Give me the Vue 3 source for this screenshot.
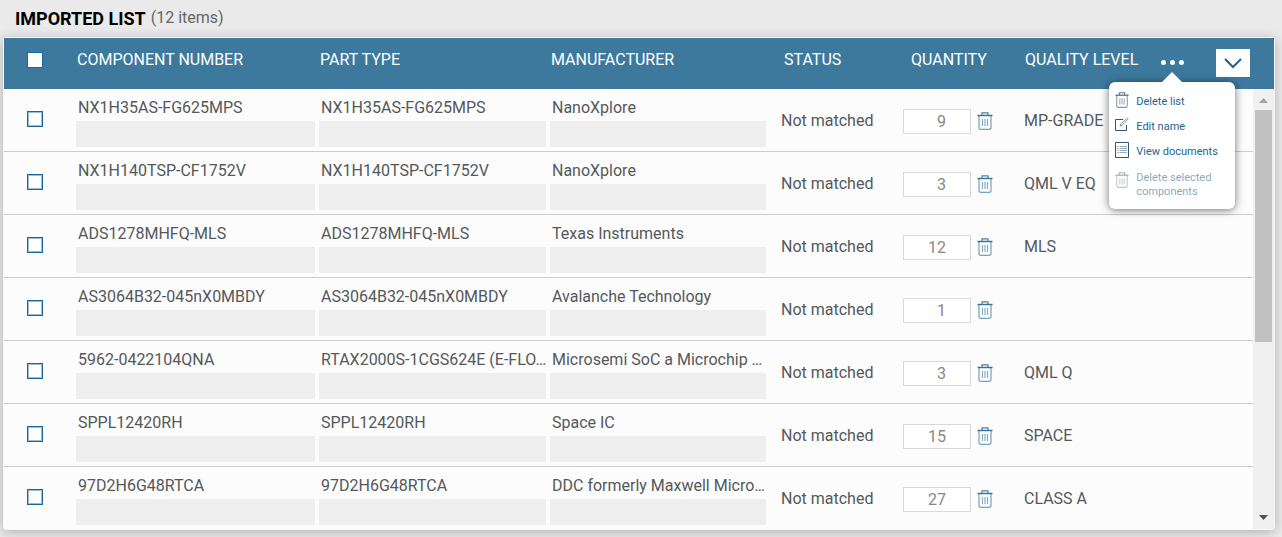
<script setup>
import { ref } from 'vue'

const rows = ref([
  { number: 'NX1H35AS-FG625MPS', type: 'NX1H35AS-FG625MPS', maker: 'NanoXplore', qty: 9, level: 'MP-GRADE' },
  { number: 'NX1H140TSP-CF1752V', type: 'NX1H140TSP-CF1752V', maker: 'NanoXplore', qty: 3, level: 'QML V EQ' },
  { number: 'ADS1278MHFQ-MLS', type: 'ADS1278MHFQ-MLS', maker: 'Texas Instruments', qty: 12, level: 'MLS' },
  { number: 'AS3064B32-045nX0MBDY', type: 'AS3064B32-045nX0MBDY', maker: 'Avalanche Technology', qty: 1, level: '' },
  { number: '5962-0422104QNA', type: 'RTAX2000S-1CGS624E (E-FLO…', maker: 'Microsemi SoC a Microchip …', qty: 3, level: 'QML Q' },
  { number: 'SPPL12420RH', type: 'SPPL12420RH', maker: 'Space IC', qty: 15, level: 'SPACE' },
  { number: '97D2H6G48RTCA', type: '97D2H6G48RTCA', maker: 'DDC formerly Maxwell Micro…', qty: 27, level: 'CLASS A' }
])
const menuOpen = ref(true)
</script>

<template>
  <main class="page">
    <header class="heading">
      <h1>IMPORTED LIST</h1>
      <span class="count">(12 items)</span>
    </header>

    <svg class="defs" aria-hidden="true">
      <symbol id="trash" viewBox="0 0 16 18">
        <path d="M0.5 3.5H15.5" stroke-width="1.4" opacity=".9" />
        <path d="M5 3V0.8H11V3" stroke-width="1.2" opacity=".8" />
        <path d="M2 4V15.5Q2 17.4 4 17.4H12Q14 17.4 14 15.5V4" stroke-width="1.2" opacity=".6" />
        <path d="M5.5 7V14M8 7V14M10.5 7V14" stroke-width="1.2" opacity=".5" />
      </symbol>
    </svg>

    <section class="panel">
      <table>
        <colgroup>
          <col class="c-check"><col class="c-number"><col class="c-type"><col class="c-maker">
          <col class="c-status"><col class="c-qty"><col class="c-level">
        </colgroup>
        <thead>
          <tr>
            <th class="check"><input type="checkbox" aria-label="Select all components"></th>
            <th>COMPONENT NUMBER</th>
            <th>PART TYPE</th>
            <th>MANUFACTURER</th>
            <th class="h-status">STATUS</th>
            <th class="h-qty">QUANTITY</th>
            <th class="h-level">
              <div class="tools">
                <span>QUALITY LEVEL</span>
                <div class="more">
                  <button class="dots" type="button" aria-label="List actions" @click="menuOpen = !menuOpen">
                    <i></i><i></i><i></i>
                  </button>
                  <div v-if="menuOpen" class="menu">
                    <button type="button">
                      <svg width="14" height="16"><use href="#trash" /></svg><span>Delete list</span>
                    </button>
                    <button type="button">
                      <svg width="14" height="16" viewBox="0 0 14 16">
                        <path d="M8 2.5H0.5V13.5H11.5V8" />
                        <path d="M5 9L5.6 7L13 0.5M5 9L7 8.4L13.6 1.5" stroke-width=".8" opacity=".7" />
                      </svg><span>Edit name</span>
                    </button>
                    <button type="button">
                      <svg width="14" height="16" viewBox="0 0 14 16">
                        <path d="M0.5 0.5H13.5V15.5H0.5Z" />
                        <path d="M2 4.5H3.5M2 6.5H3.5M2 8.5H3.5M2 10.5H3.5M4.5 4.5H12M4.5 6.5H12M4.5 8.5H12M4.5 10.5H12" opacity=".5" />
                      </svg><span>View documents</span>
                    </button>
                    <button class="last" type="button" disabled>
                      <svg width="14" height="16"><use href="#trash" /></svg><span>Delete selected components</span>
                    </button>
                  </div>
                </div>
                <button class="collapse" type="button" aria-label="Collapse list">
                  <svg width="18" height="11" viewBox="0 0 18 11"><path d="M1 1L9 9L17 1" stroke-width="2" /></svg>
                </button>
              </div>
            </th>
          </tr>
        </thead>
        <tbody>
          <tr v-for="row in rows" :key="row.number">
            <td class="check"><input type="checkbox" :aria-label="'Select ' + row.number"></td>
            <td class="pair"><div class="value">{{ row.number }}</div><div class="match"></div></td>
            <td class="pair"><div class="value">{{ row.type }}</div><div class="match"></div></td>
            <td class="pair"><div class="value">{{ row.maker }}</div><div class="match"></div></td>
            <td class="status">Not matched</td>
            <td class="qty">
              <div class="qty-line">
                <input v-model="row.qty" type="text" :aria-label="'Quantity of ' + row.number">
                <button type="button" :aria-label="'Delete ' + row.number">
                  <svg width="16" height="18"><use href="#trash" /></svg>
                </button>
              </div>
            </td>
            <td class="level">{{ row.level }}</td>
          </tr>
        </tbody>
      </table>
      <div class="rail">
        <div class="rail-head"></div>
        <div class="track">
          <svg width="9" height="5" viewBox="0 0 9 5"><path class="up" d="M0 5L4.5 0L9 5Z" /></svg>
          <div class="thumb"></div>
          <svg width="9" height="5" viewBox="0 0 9 5"><path class="down" d="M0 0L4.5 5L9 0Z" /></svg>
        </div>
      </div>
    </section>
  </main>
</template>

<style>
body {
  margin: 0;
  background: #eaeaea;
}
</style>

<style scoped>
* {
  box-sizing: border-box;
}
.page {
  min-height: 100vh;
  padding: 0 7px 7px 3px;
  font: 16px/22px Roboto, sans-serif;
  color: #55585b;
}
.defs {
  position: absolute;
  width: 0;
  height: 0;
}
svg {
  display: block;
  flex: none;
  fill: none;
  stroke: currentColor;
}
.heading {
  display: flex;
  gap: 5px;
  height: 37px;
  padding: 7px 12px;
}
h1 {
  margin: 0;
  font-size: 18px;
  line-height: 24px;
  font-weight: 700;
  color: #000;
}
.count {
  color: #666;
}
.panel {
  display: flex;
  border: 1px solid #f7f7f7;
  border-radius: 3px;
  background: #fcfcfc;
  box-shadow: 0 2px 12px rgba(0, 0, 0, .25);
}
table {
  flex: 1;
  width: 0;
  table-layout: fixed;
  border-collapse: separate;
  border-spacing: 0;
}
.c-check { width: 70px; }
.c-number { width: 243px; }
.c-type { width: 231px; }
.c-maker { width: 220px; }
.c-status { width: 125px; }
.c-qty { width: 117px; }
.c-level { width: 243px; }
th {
  height: 51px;
  padding: 11px 3px 0;
  background: #3d799d;
  color: #fff;
  font-weight: 400;
  text-align: left;
  vertical-align: top;
}
td {
  height: 63px;
  padding: 0 2px;
  border-bottom: 1px solid #ccc;
}
tbody tr:last-child td {
  height: 62px;
  border-bottom: 0;
}
th.h-status { padding-left: 16px; }
th.h-qty { padding-left: 18px; }
th.h-level { padding: 11px 2px 0 15px; }
.check input {
  display: block;
  appearance: none;
  width: 16px;
  height: 16px;
  margin: 0 0 0 20px;
  border: 1px solid #1a659b;
  background: #fff;
  box-shadow: inset 0 0 0 1px #9dbdd4;
}
th.check {
  padding-top: 14px;
}
th.check input {
  box-shadow: none;
}
td.check {
  padding: 22px 3px 0;
  vertical-align: top;
}
td.pair {
  padding-top: 8px;
  vertical-align: top;
}
.value {
  padding-left: 2px;
  margin-bottom: 2px;
  overflow: hidden;
  white-space: nowrap;
}
.match {
  height: 26px;
  background: #eee;
}
td.status {
  padding: 2px 0 0 13px;
}
td.level {
  padding: 2px 0 0 14px;
}
.qty {
  padding-left: 10px;
}
.qty-line {
  display: flex;
  align-items: center;
  gap: 6px;
  padding-top: 2px;
}
.qty-line input {
  width: 68px;
  height: 25px;
  padding: 0 24px 0 0;
  border: 1px solid #d9d9d9;
  background: #fff;
  color: #888;
  font: inherit;
  text-align: right;
}
button {
  padding: 0;
  border: 0;
  background: none;
  font: inherit;
  color: #1f648f;
  cursor: pointer;
}
.tools {
  display: flex;
}
.more {
  position: relative;
  margin-left: 21px;
}
.dots {
  display: flex;
  gap: 4px;
  height: 26px;
  width: 26px;
  align-items: center;
  justify-content: center;
}
.dots i {
  width: 5px;
  height: 5px;
  border-radius: 50%;
  background: #fff;
}
.collapse {
  display: flex;
  align-items: center;
  justify-content: center;
  width: 34px;
  height: 28px;
  margin: 0 1px 0 auto;
  background: #fff;
}
.menu {
  position: absolute;
  top: 33px;
  left: -50px;
  z-index: 1;
  width: 126px;
  padding: 10px 6px;
  border-radius: 6px;
  background: #fff;
  box-shadow: 0 1px 8px rgba(0, 0, 0, .55);
}
.menu::before {
  content: '';
  position: absolute;
  top: -10px;
  left: 53px;
  border: solid transparent;
  border-width: 0 10px 10px;
  border-bottom-color: #fff;
}
.menu button {
  display: flex;
  gap: 7px;
  width: 100%;
  margin-bottom: 8px;
  font-size: 11px;
  line-height: 14px;
  text-align: left;
}
.menu button span {
  padding-top: 3px;
}
.menu button svg {
  color: #30556f;
}
.menu button:disabled {
  opacity: .55;
}
.menu button.last {
  margin: 9px 0 0;
}
.menu button.last svg {
  margin-top: 4px;
}
.rail {
  display: flex;
  flex-direction: column;
  width: 21px;
}
.rail-head {
  height: 51px;
  background: #3d799d;
}
.track {
  display: flex;
  flex: 1;
  flex-direction: column;
  align-items: center;
  padding: 9px 2px;
  background: #f0f0f0;
}
.track svg {
  stroke: none;
}
.up { fill: #a3a3a3; }
.down { fill: #505050; }
.thumb {
  width: 17px;
  height: 55%;
  margin: 7px 0 auto;
  background: #c1c1c1;
}
</style>
